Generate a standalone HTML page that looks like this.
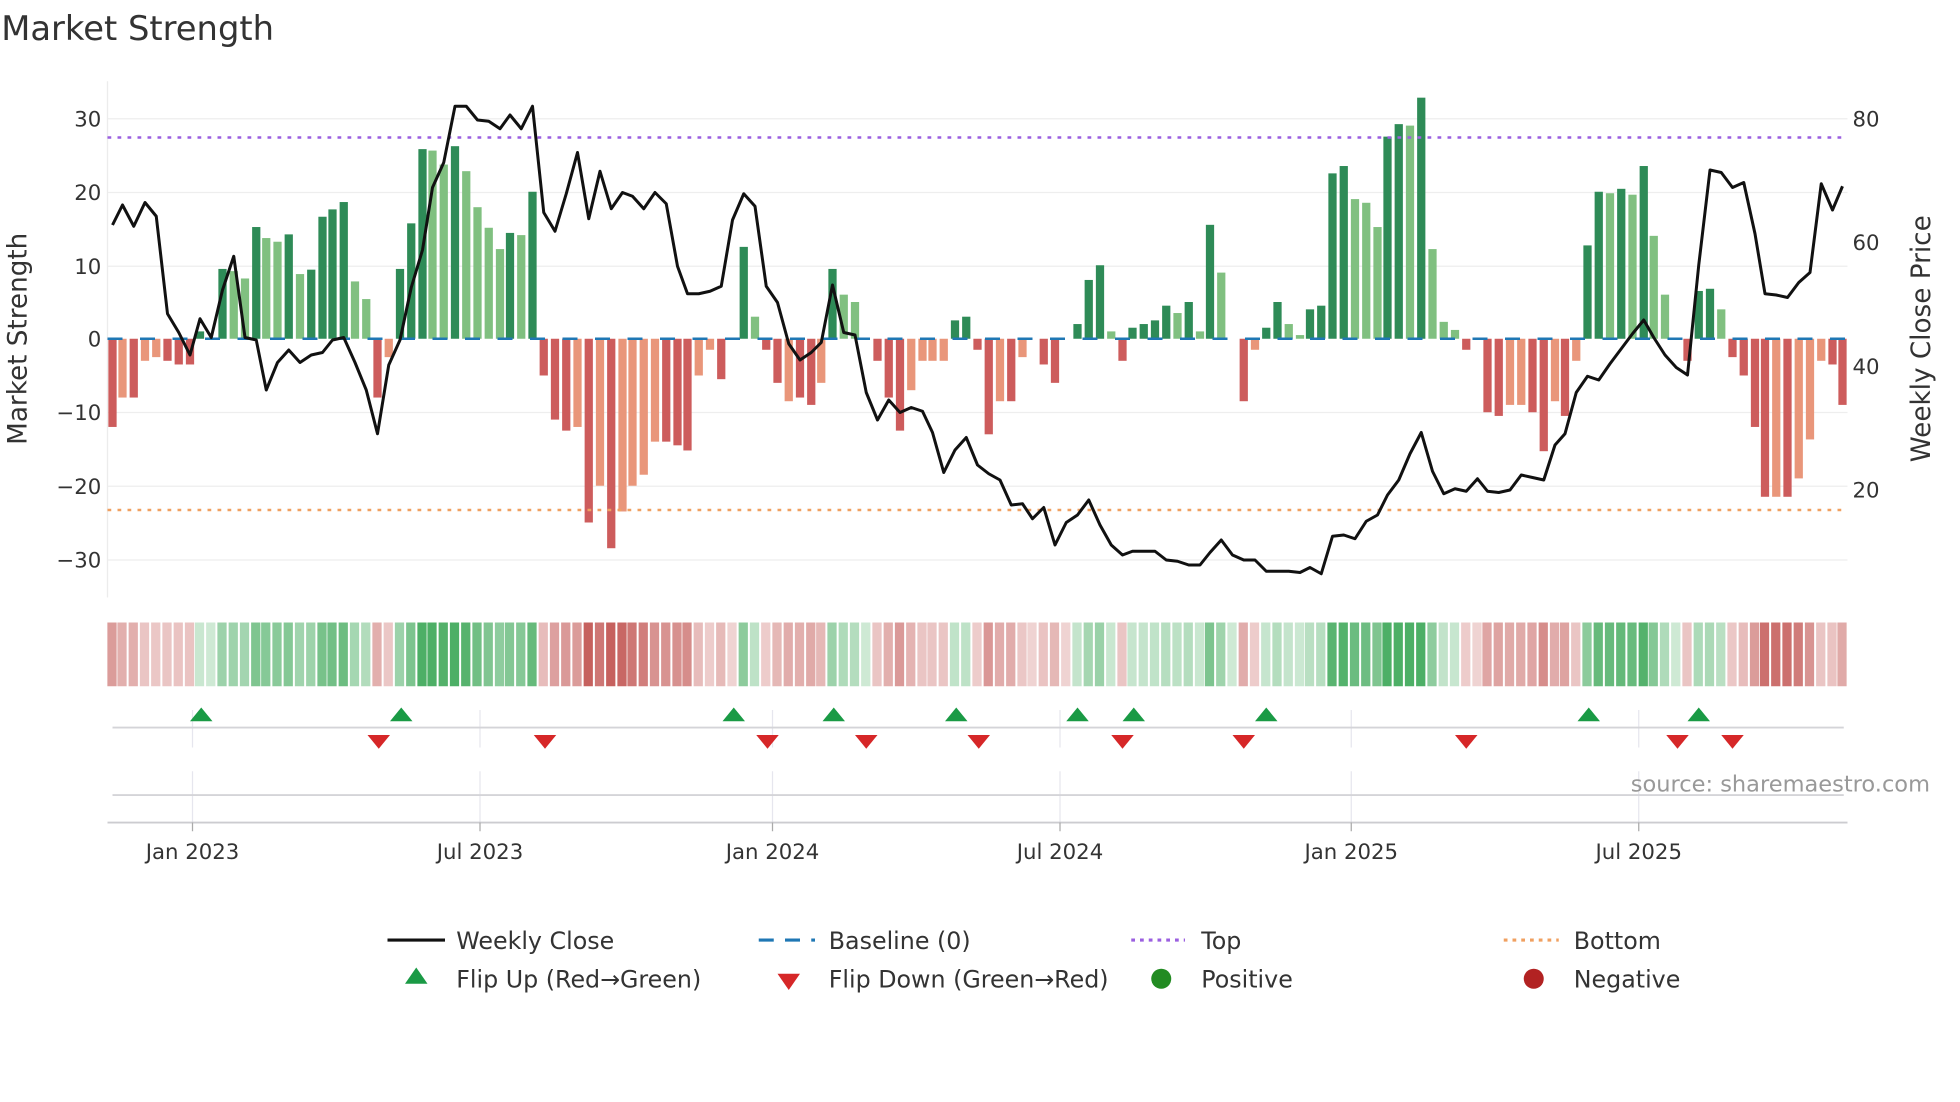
<!DOCTYPE html>
<html><head><meta charset="utf-8"><style>
html,body{margin:0;padding:0;background:#fff;width:1960px;height:1102px;overflow:hidden}
svg{display:block}
text{font-family:"DejaVu Sans","Liberation Sans",sans-serif;fill:#333}
</style></head><body>
<svg id="s" width="1960" height="1102" viewBox="0 0 1568 881.6" xmlns="http://www.w3.org/2000/svg">
<text x="1" y="32" font-size="27">Market Strength</text>
<g stroke="#eeeeee" stroke-width="1">
<line x1="86" x2="1478" y1="95" y2="95"/><line x1="86" x2="1478" y1="154" y2="154"/>
<line x1="86" x2="1478" y1="213" y2="213"/><line x1="86" x2="1478" y1="330" y2="330"/>
<line x1="86" x2="1478" y1="389" y2="389"/><line x1="86" x2="1478" y1="448" y2="448"/>
</g>
<line x1="86" x2="86" y1="65" y2="478" stroke="#ececec"/>
<g font-size="17" text-anchor="end">
<text x="81" y="101">30</text><text x="81" y="160">20</text><text x="81" y="219">10</text>
<text x="81" y="277">0</text><text x="81" y="336">−10</text><text x="81" y="395">−20</text><text x="81" y="454">−30</text>
</g>
<g font-size="17">
<text x="1482" y="101">80</text><text x="1482" y="200">60</text><text x="1482" y="299">40</text><text x="1482" y="398">20</text>
</g>
<text transform="translate(21,271) rotate(-90)" font-size="21" text-anchor="middle">Market Strength</text>
<text transform="translate(1544,271) rotate(-90)" font-size="21" text-anchor="middle">Weekly Close Price</text>
<g id="bars"></g>
<line x1="86" x2="1478" y1="271" y2="271" stroke="#1f77b4" stroke-width="2" stroke-dasharray="12,14"/>
<line x1="86" x2="1478" y1="110" y2="110" stroke="#9b5fe0" stroke-width="2" stroke-dasharray="3,5"/>
<line x1="86" x2="1478" y1="408" y2="408" stroke="#f0a060" stroke-width="2" stroke-dasharray="3,5"/>
<polyline fill="none" stroke="#111" stroke-width="2.4" stroke-linejoin="round" points="90,180 98,164 107,181 116,162 125,173 134,251 143,266 152,284 160,255 169,270 178,232 187,205 196,270 205,272 213,312 222,290 231,280 240,290 249,284 258,282 266,272 275,270 284,290 293,312 302,347 311,292 320,272 329,230 338,200 346,150 355,130 364,85 373,85 382,96 391,97 400,103 408,92 417,103 426,85 435,170 444,185 453,155 462,122 471,175 480,137 489,167 498,154 506,157 515,167 524,154 533,163 542,213 550,235 559,235 568,233 577,229 586,176 595,155 604,165 613,229 622,242 631,275 640,288 649,282 657,274 666,228 675,266 684,268 693,314 702,336 711,320 720,330 729,326 738,329 746,346 755,378 764,360 773,350 782,372 791,379 800,384 809,404 818,403 826,415 835,406 844,436 853,418 862,412 871,400 880,420 889,436 898,444 906,441 915,441 924,441 933,448 942,449 951,452 960,452 968,442 977,432 986,444 995,448 1004,448 1013,457 1022,457 1031,457 1040,458 1048,454 1057,459 1066,429 1075,428 1084,431 1093,417 1102,412 1110,396 1119,384 1128,363 1137,346 1146,377 1155,395 1164,391 1173,393 1182,383 1190,393 1199,394 1208,392 1217,380 1226,382 1235,384 1244,356 1252,347 1261,314 1270,301 1279,304 1288,291 1297,279 1306,267 1315,256 1323,270 1332,284 1341,294 1350,300 1359,212 1368,136 1377,138 1386,150 1395,146 1404,187 1412,235 1421,236 1430,238 1439,226 1448,218 1457,147 1466,168 1474,149"/>
<g id="strip"></g>
<g stroke="#e6e6ee" stroke-width="1">
<line x1="154" x2="154" y1="568" y2="598"/><line x1="384" x2="384" y1="568" y2="598"/><line x1="618" x2="618" y1="568" y2="598"/><line x1="848" x2="848" y1="568" y2="598"/><line x1="1081" x2="1081" y1="568" y2="598"/><line x1="1311" x2="1311" y1="568" y2="598"/>
<line x1="154" x2="154" y1="617" y2="658"/><line x1="384" x2="384" y1="617" y2="658"/><line x1="618" x2="618" y1="617" y2="658"/><line x1="848" x2="848" y1="617" y2="658"/><line x1="1081" x2="1081" y1="617" y2="658"/><line x1="1311" x2="1311" y1="617" y2="658"/>
</g>
<line x1="90" x2="1475" y1="582" y2="582" stroke="#d4d4d8" stroke-width="1.5"/>
<line x1="90" x2="1475" y1="636" y2="636" stroke="#d4d4d8" stroke-width="1.5"/>
<line x1="86" x2="1478" y1="658" y2="658" stroke="#ccccd0" stroke-width="1.5"/>
<g stroke="#aaa"><line x1="154" x2="154" y1="658" y2="665"/><line x1="384" x2="384" y1="658" y2="665"/><line x1="618" x2="618" y1="658" y2="665"/><line x1="848" x2="848" y1="658" y2="665"/><line x1="1081" x2="1081" y1="658" y2="665"/><line x1="1311" x2="1311" y1="658" y2="665"/></g>
<g id="tri"></g>
<text x="1544" y="633" font-size="18" text-anchor="end" style="fill:#999">source: sharemaestro.com</text>
<g font-size="17" text-anchor="middle">
<text x="154" y="687">Jan 2023</text><text x="384" y="687">Jul 2023</text><text x="618" y="687">Jan 2024</text>
<text x="848" y="687">Jul 2024</text><text x="1081" y="687">Jan 2025</text><text x="1311" y="687">Jul 2025</text>
</g>
<g font-size="19">
<line x1="310" x2="356" y1="752" y2="752" stroke="#111" stroke-width="2.5"/><text x="365" y="759">Weekly Close</text>
<line x1="607" x2="652" y1="752" y2="752" stroke="#1f77b4" stroke-width="2.5" stroke-dasharray="12,9"/><text x="663" y="759">Baseline (0)</text>
<line x1="905" x2="948" y1="752" y2="752" stroke="#9b5fe0" stroke-width="2.5" stroke-dasharray="3,4"/><text x="961" y="759">Top</text>
<line x1="1203" x2="1247" y1="752" y2="752" stroke="#f0a060" stroke-width="2.5" stroke-dasharray="3,4"/><text x="1259" y="759">Bottom</text>
<polygon points="333,774 324,787 342,787" fill="#1a9a45"/><text x="365" y="790">Flip Up (Red→Green)</text>
<polygon points="622,779 640,779 631,792" fill="#d62728"/><text x="663" y="790">Flip Down (Green→Red)</text>
<circle cx="929" cy="783" r="8" fill="#228b22"/><text x="961" y="790">Positive</text>
<circle cx="1227" cy="783" r="8" fill="#b22222"/><text x="1259" y="790">Negative</text>
</g>
</svg>
<script>
var d="90,-12,1 98,-8,0 107,-8,1 116,-3,0 125,-2.5,0 134,-3,1 143,-3.5,1 152,-3.5,1 160,1,1 169,0,0 178,9.5,1 187,9.2,0 196,8.2,0 205,15.2,1 213,13.7,0 222,13.2,0 231,14.2,1 240,8.8,0 249,9.4,1 258,16.6,1 266,17.6,1 275,18.6,1 284,7.8,0 293,5.4,0 302,-8,1 311,-2.5,0 320,9.5,1 329,15.7,1 338,25.8,1 346,25.6,0 355,23.7,0 364,26.2,1 373,22.8,0 382,17.9,0 391,15.1,0 400,12.2,0 408,14.4,1 417,14.1,0 426,20,1 435,-5,1 444,-11,1 453,-12.5,1 462,-12,0 471,-25,1 480,-20,0 489,-28.5,1 498,-23.5,0 506,-20,0 515,-18.5,0 524,-14,0 533,-14,1 542,-14.5,1 550,-15.2,1 559,-5,0 568,-1.5,0 577,-5.5,1 586,0,0 595,12.5,1 604,3,0 613,-1.5,1 622,-6,1 631,-8.5,0 640,-8,1 649,-9,1 657,-6,0 666,9.5,1 675,6,0 684,5,0 693,0,0 702,-3,1 711,-8,1 720,-12.5,1 729,-7,0 738,-3,0 746,-3,0 755,-3,0 764,2.5,1 773,3,1 782,-1.5,1 791,-13,1 800,-8.5,0 809,-8.5,1 818,-2.5,0 826,0,0 835,-3.5,1 844,-6,1 853,0,0 862,2,1 871,8,1 880,10,1 889,1,0 898,-3,1 906,1.5,1 915,2,1 924,2.5,1 933,4.5,1 942,3.5,0 951,5,1 960,1,0 968,15.5,1 977,9,0 986,0,0 995,-8.5,1 1004,-1.5,0 1013,1.5,1 1022,5,1 1031,2,0 1040,0.5,0 1048,4,1 1057,4.5,1 1066,22.5,1 1075,23.5,1 1084,19,0 1093,18.5,0 1102,15.2,0 1110,27.5,1 1119,29.2,1 1128,29,0 1137,32.8,1 1146,12.2,0 1155,2.3,0 1164,1.2,0 1173,-1.5,1 1182,0,0 1190,-10,1 1199,-10.5,1 1208,-9,0 1217,-9,0 1226,-10,1 1235,-15.3,1 1244,-8.5,0 1252,-10.5,1 1261,-3,0 1270,12.7,1 1279,20,1 1288,19.8,0 1297,20.4,1 1306,19.6,0 1315,23.5,1 1323,14,0 1332,6,0 1341,0,0 1350,-3,1 1359,6.5,1 1368,6.8,1 1377,4,0 1386,-2.5,1 1395,-5,1 1404,-12,1 1412,-21.5,1 1421,-21.5,0 1430,-21.5,1 1439,-19,0 1448,-13.7,0 1457,-3,0 1466,-3.5,1 1474,-9,1";
var NS="http://www.w3.org/2000/svg",B=document.getElementById("bars"),S=document.getElementById("strip"),T=document.getElementById("tri");
function R(p,x,y,w,h,f,o){var r=document.createElementNS(NS,"rect");r.setAttribute("x",x);r.setAttribute("y",y);r.setAttribute("width",w);r.setAttribute("height",h);r.setAttribute("fill",f);if(o!=null)r.setAttribute("fill-opacity",o);p.appendChild(r);}
var prev=1;
d.split(" ").forEach(function(s){var a=s.split(","),x=+a[0],v=+a[1],k=+a[2];
 var h=Math.abs(v)*5.88,c;
 if(v>0)c=k?"#2e8b57":"#80c080";else c=k?"#cd5c5c":"#e9967a";
 if(v!=0)R(B,x-3.3,v>0?271-h:271,6.6,h,c);
 var sg=v>0?1:(v<0?-1:prev);prev=sg;
 var o=Math.min(0.9,0.25+Math.abs(v)/38);
 R(S,x-4.1,498,7.4,51,sg>0?"#3aa655":"#c0504d",o);
});
[161,321,587,667,765,862,907,1013,1271,1359].forEach(function(x){var p=document.createElementNS(NS,"polygon");p.setAttribute("points",(x)+",566 "+(x-9)+",577 "+(x+9)+",577");p.setAttribute("fill","#1a9a45");T.appendChild(p);});
[303,436,614,693,783,898,995,1173,1342,1386].forEach(function(x){var p=document.createElementNS(NS,"polygon");p.setAttribute("points",(x-9)+",588 "+(x+9)+",588 "+x+",599");p.setAttribute("fill","#d62728");T.appendChild(p);});
</script>
</body></html>
